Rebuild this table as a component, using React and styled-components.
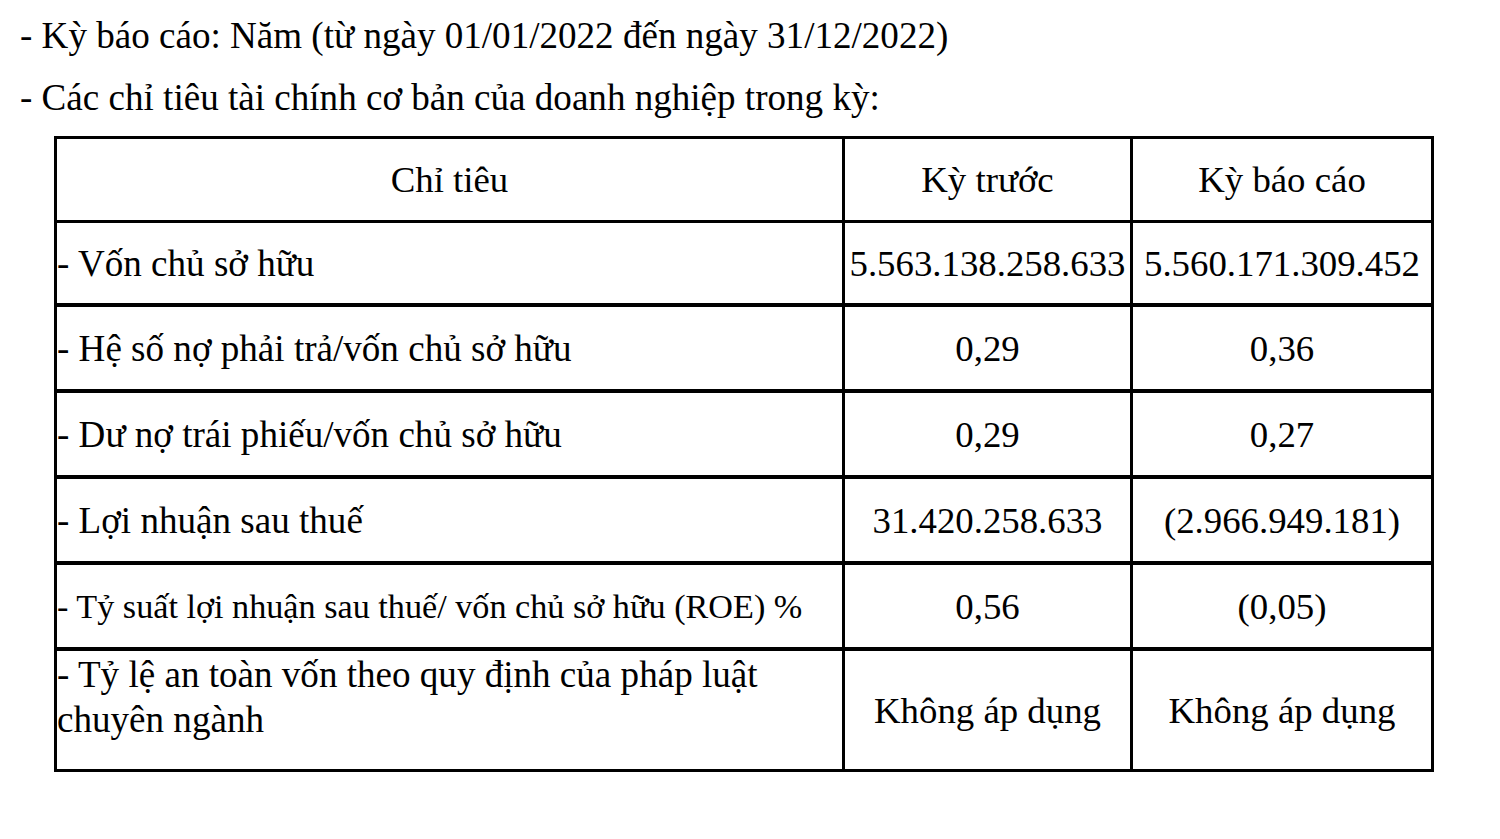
import React from 'react';
import styled, { createGlobalStyle } from 'styled-components';

const GlobalStyle = createGlobalStyle`
    html, body {
        margin: 0;
        padding: 0;
        background: #fff;
    }
    body {
        font-family: "Liberation Serif", "Times New Roman", serif;
        color: #000;
    }
`;

const Page = styled.div`
    padding: 5px 0 0 20px;
    font-size: 37.1px;
`;

const Line = styled.p`
    margin: 0;
    line-height: 62px;
    white-space: nowrap;
`;

const Table = styled.table`
    margin: 7px 0 0 34px;
    border-collapse: separate;
    border-spacing: 0;
    table-layout: fixed;
    width: 1380px;
    border-top: 3px solid #000;
    border-left: 3px solid #000;
`;

const Cell = styled.td`
    box-sizing: border-box;
    padding: 0;
    border-right: 3px solid #000;
    border-bottom: ${p => p.$line || 4}px solid #000;
    height: ${p => p.$h}px;
    vertical-align: middle;
    text-align: ${p => (p.$left ? 'left' : 'center')};
    font-size: ${p => (p.$small ? '34.2px' : p.$left ? '37.1px' : '36.8px')};
    font-weight: normal;
    line-height: 45px;
    white-space: ${p => (p.$left ? 'normal' : 'nowrap')};
    padding-bottom: ${p => p.$pb || 0}px;
`;

const rows = [
    { label: '- Vốn chủ sở hữu', prev: '5.563.138.258.633', cur: '5.560.171.309.452', h: 84 },
    { label: '- Hệ số nợ phải trả/vốn chủ sở hữu', prev: '0,29', cur: '0,36', h: 86 },
    { label: '- Dư nợ trái phiếu/vốn chủ sở hữu', prev: '0,29', cur: '0,27', h: 86 },
    { label: '- Lợi nhuận sau thuế', prev: '31.420.258.633', cur: '(2.966.949.181)', h: 86 },
    { label: '- Tỷ suất lợi nhuận sau thuế/ vốn chủ sở hữu (ROE) %', prev: '0,56', cur: '(0,05)', h: 86, small: true },
];

const App = () => (
    <>
        <GlobalStyle />
        <Page>
            <Line>- Kỳ báo cáo: Năm (từ ngày 01/01/2022 đến ngày 31/12/2022)</Line>
            <Line>- Các chỉ tiêu tài chính cơ bản của doanh nghiệp trong kỳ:</Line>
            <Table>
                <colgroup>
                    <col style={{ width: 788 }} />
                    <col style={{ width: 288 }} />
                    <col style={{ width: 301 }} />
                </colgroup>
                <thead>
                    <tr>
                        <Cell as="th" $h={84} $line={3}>Chỉ tiêu</Cell>
                        <Cell as="th" $h={84} $line={3}>Kỳ trước</Cell>
                        <Cell as="th" $h={84} $line={3}>Kỳ báo cáo</Cell>
                    </tr>
                </thead>
                <tbody>
                    {rows.map(r => (
                        <tr key={r.label}>
                            <Cell $left $small={r.small} $h={r.h}>{r.label}</Cell>
                            <Cell $h={r.h}>{r.prev}</Cell>
                            <Cell $h={r.h}>{r.cur}</Cell>
                        </tr>
                    ))}
                    <tr>
                        <Cell $left $h={121} $line={3} $pb={26}>
                            - Tỷ lệ an toàn vốn theo quy định của pháp luật chuyên ngành
                        </Cell>
                        <Cell $h={121} $line={3}>Không áp dụng</Cell>
                        <Cell $h={121} $line={3}>Không áp dụng</Cell>
                    </tr>
                </tbody>
            </Table>
        </Page>
    </>
);

export default App;
